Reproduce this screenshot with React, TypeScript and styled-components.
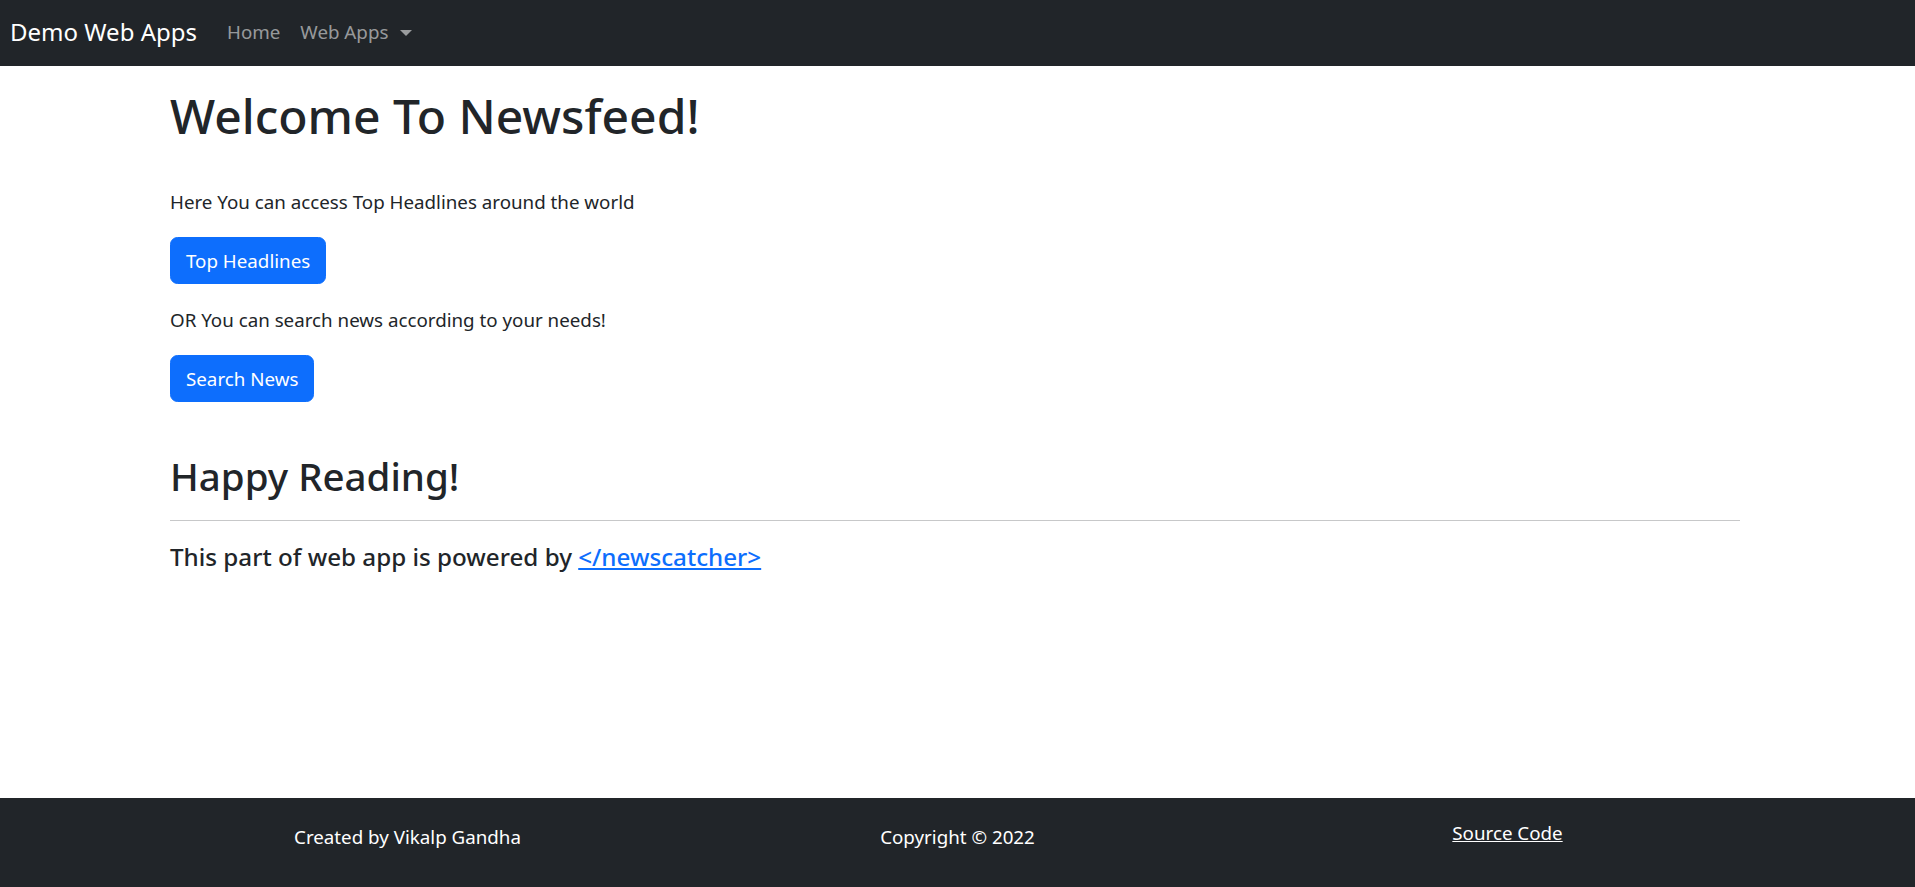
import styled, { createGlobalStyle } from "styled-components";

const GlobalStyle = createGlobalStyle`
  html, body {
    margin: 0;
    padding: 0;
    background: #ffffff;
  }
  body {
    font-family: "Noto Sans", "Open Sans", "Liberation Sans", sans-serif;
    color: #212529;
    font-size: 18.75px;
    line-height: 30px;
  }
  * {
    box-sizing: border-box;
  }
`

const Page = styled.div`
  min-height: 100vh;
  display: flex;
  flex-direction: column;
`

const Navbar = styled.nav`
  height: 66px;
  background-color: #212529;
  display: flex;
  align-items: center;
  padding: 0 10px;
`

const Brand = styled.a`
  font-size: 24px;
  line-height: 36px;
  color: #ffffff;
  text-decoration: none;
  margin-right: 20px;
  margin-top: -3px;
`

const NavLink = styled.a`
  font-size: 18.75px;
  line-height: 30px;
  padding: 0 10px;
  color: rgba(255, 255, 255, 0.55);
  text-decoration: none;
  display: flex;
  align-items: center;
  margin-top: -2px;
`

const Caret = styled.span`
  display: inline-block;
  margin-left: 12px;
  margin-top: 2px;
  border-top: 6px solid rgba(255, 255, 255, 0.55);
  border-left: 6px solid transparent;
  border-right: 6px solid transparent;
`

const Main = styled.main`
  flex: 1;
  padding: 20px 175px 0 170px;
`

const Title = styled.h1`
  margin: 0 0 41px;
  font-size: 48px;
  line-height: 60px;
  font-weight: 500;
`

const Text = styled.p`
  margin: 0 0 20px;
`

const Button = styled.button<{ $gap: number }>`
  display: inline-block;
  font-family: inherit;
  font-size: 18.75px;
  line-height: 30px;
  padding: 7.5px 15px;
  color: #ffffff;
  background-color: #0d6efd;
  border: 1.25px solid #0d6efd;
  border-radius: 7.5px;
  margin-bottom: ${p => p.$gap}px;
  cursor: pointer;
`

const Subtitle = styled.h2`
  margin: 0;
  font-size: 38.5px;
  line-height: 48px;
  font-weight: 500;
`

const Divider = styled.hr`
  margin: 20px 0 21px;
  border: 0;
  border-top: 1.25px solid #212529;
  opacity: 0.25;
`

const Powered = styled.h5`
  margin: 0;
  font-size: 24.2px;
  line-height: 30px;
  font-weight: 500;

  & > a {
    color: #0d6efd;
  }
`

const Footer = styled.footer`
  height: 89px;
  background-color: #212529;
  color: #ffffff;
`

const FooterRow = styled.div`
  width: 1650px;
  margin: 0 auto;
  display: grid;
  grid-template-columns: repeat(3, 1fr);
  text-align: center;
  padding-top: 24px;
`

const FooterItem = styled.div<{ $lift?: number }>`
  margin-top: ${p => -(p.$lift || 0)}px;

  & > a {
    color: #ffffff;
  }
`

function App() {
    return (
        <Page>
            <GlobalStyle/>
            <Navbar>
                <Brand href="#">Demo Web Apps</Brand>
                <NavLink href="#">Home</NavLink>
                <NavLink href="#">Web Apps<Caret/></NavLink>
            </Navbar>
            <Main>
                <Title>Welcome To Newsfeed!</Title>
                <Text>Here You can access Top Headlines around the world</Text>
                <Button $gap={21}>Top Headlines</Button>
                <Text>OR You can search news according to your needs!</Text>
                <Button $gap={50}>Search News</Button>
                <Subtitle>Happy Reading!</Subtitle>
                <Divider/>
                <Powered>This part of web app is powered by <a href="#">&lt;/newscatcher&gt;</a></Powered>
            </Main>
            <Footer>
                <FooterRow>
                    <FooterItem>Created by Vikalp Gandha</FooterItem>
                    <FooterItem>Copyright © 2022</FooterItem>
                    <FooterItem $lift={4}><a href="#">Source Code</a></FooterItem>
                </FooterRow>
            </Footer>
        </Page>
    )
}

export default App;
